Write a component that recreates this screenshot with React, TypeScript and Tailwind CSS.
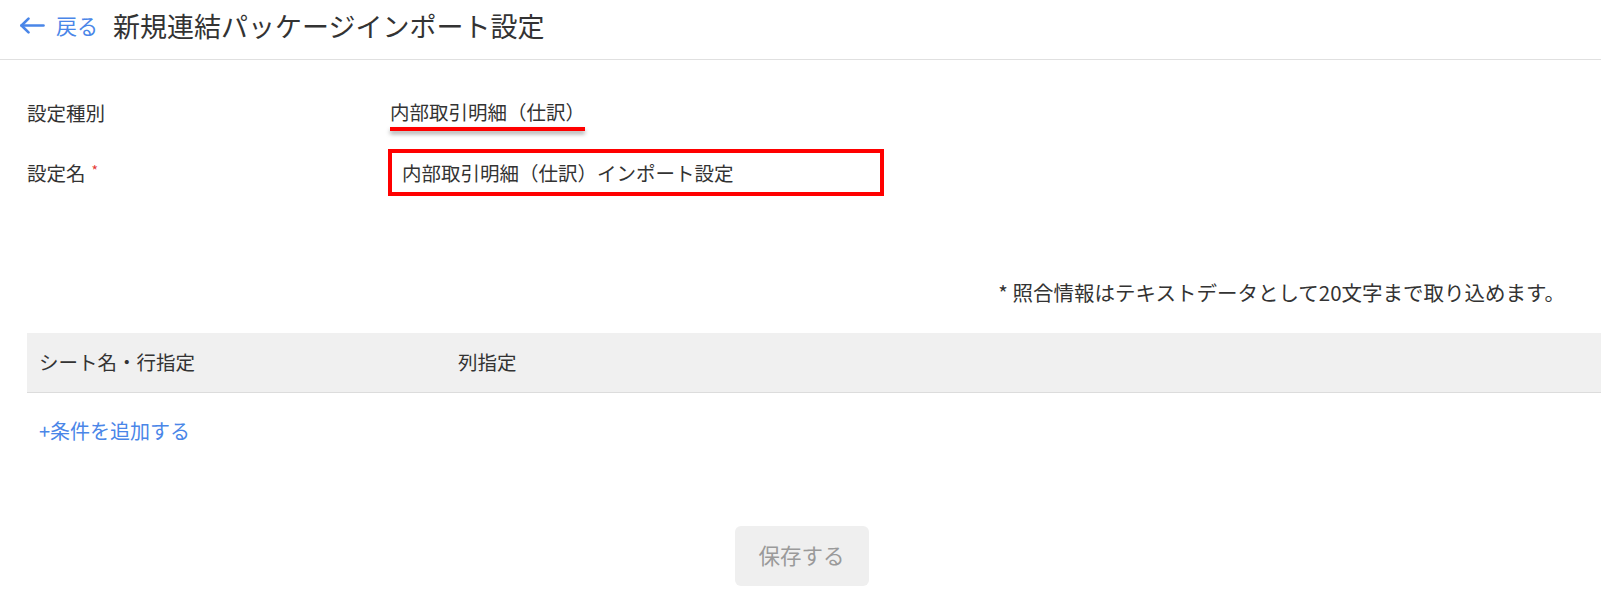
const font = { fontFamily: '"Noto Sans CJK JP", "Noto Sans", sans-serif' };

function BackArrow() {
    return (
        <svg viewBox="0 0 26 17" className="w-[26px] h-[17px]" fill="none" stroke="currentColor" strokeWidth={2.6} strokeLinecap="round" strokeLinejoin="round">
            <path d="M2.5 8.5H24.5" />
            <path d="M9.5 1.6L2.5 8.5L9.5 15.4" />
        </svg>
    );
}

export default function App() {
    return (
        <main className="min-h-screen bg-white text-[#333333]" style={font}>
            {/* Header */}
            <header className="flex items-center h-[60px] border-b border-[#e0e0e0] pl-[19px] pb-[8px]">
                <button className="flex items-center gap-[11px] text-[#4a86e8]">
                    <BackArrow />
                    <span className="text-[21px] leading-none">戻る</span>
                </button>
                <h1 className="ml-[15px] text-[27px] leading-none text-[#333333]">新規連結パッケージインポート設定</h1>
            </header>

            <div className="pl-[27px]">
                {/* Form rows */}
                <div className="flex items-center mt-[40px] h-[26px]">
                    <div className="w-[363px] text-[19.5px] leading-none">設定種別</div>
                    <div className="relative">
                        <span className="text-[19.5px] leading-none">内部取引明細（仕訳）</span>
                        <div className="absolute left-0 right-0 top-[26px] h-[4px] bg-[#ff0000] shadow-[0_3px_4px_rgba(0,0,0,0.35)]" />
                    </div>
                </div>

                <div className="flex items-center mt-[23px]">
                    <div className="w-[361px] text-[19.5px] leading-none">
                        設定名<span className="text-[#e53935] text-[14px] align-top ml-[6px]">*</span>
                    </div>
                    <div className="w-[496px] h-[47px] border-[4px] border-[#ff0000] flex items-center pl-[10px]">
                        <span className="text-[19.5px] leading-none">内部取引明細（仕訳）インポート設定</span>
                    </div>
                </div>

                {/* Note */}
                <div className="flex justify-end pr-[36px] mt-[86px]">
                    <p className="text-[20.5px] leading-none">* 照合情報はテキストデータとして20文字まで取り込めます。</p>
                </div>

                {/* Table header */}
                <div className="flex items-center h-[60px] mt-[30px] bg-[#f0f0f0] border-b border-[#dcdcdc]">
                    <div className="w-[431px] pl-[12px] text-[19.5px] leading-none">シート名・行指定</div>
                    <div className="text-[19.5px] leading-none">列指定</div>
                </div>

                <button className="mt-[28px] pl-[12px] text-[20px] leading-none text-[#4a86e8]">+条件を追加する</button>
            </div>

            {/* Save */}
            <div className="flex justify-center mt-[82px] pl-[2px]">
                <button className="w-[134px] h-[60px] rounded-[6px] bg-[#efefef] text-[#9a9a9a] text-[21.5px]">保存する</button>
            </div>
        </main>
    );
}
